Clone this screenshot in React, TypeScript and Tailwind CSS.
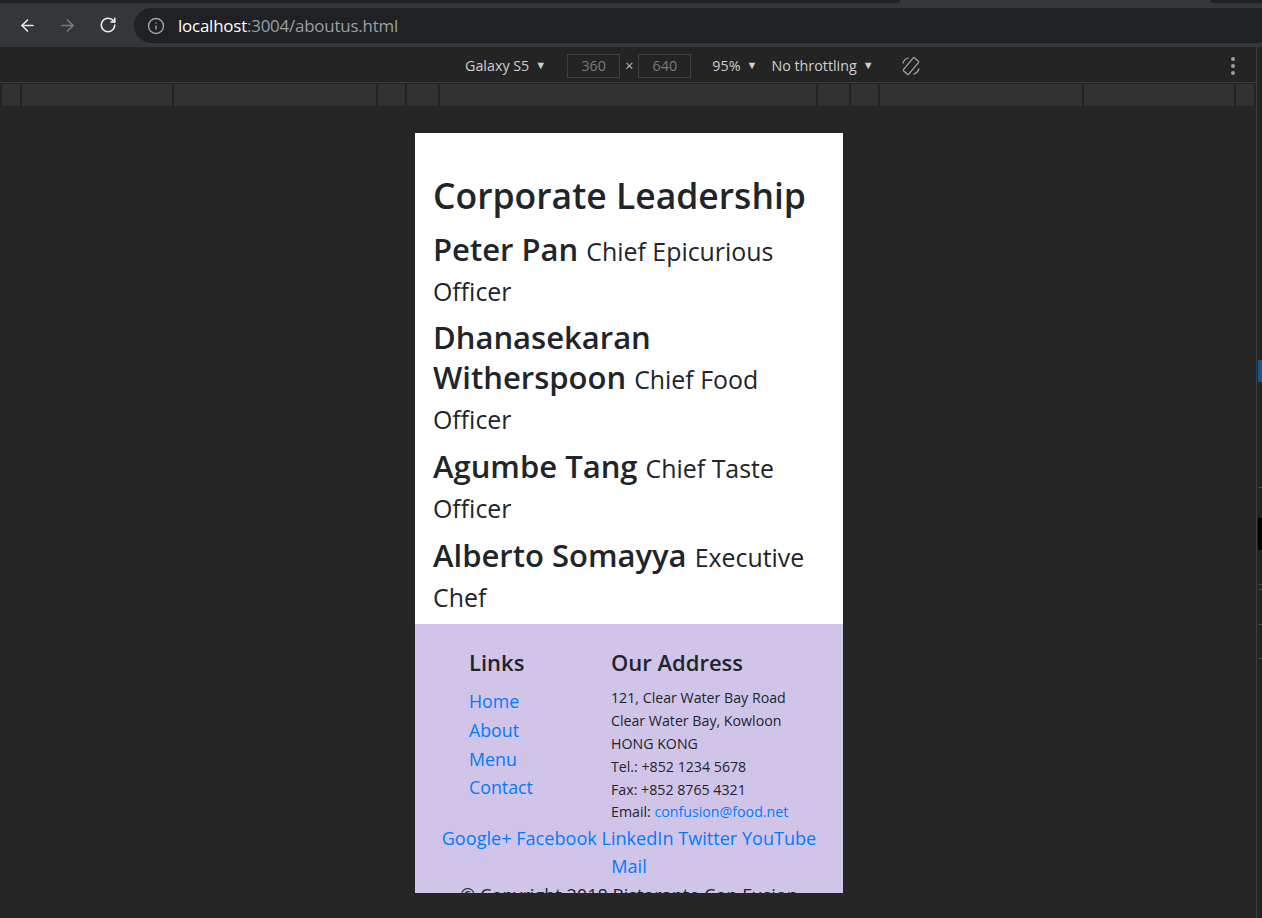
import { ArrowLeft, ArrowRight, RotateCw, Info } from 'lucide-react';

const leaders = [
  { lines: ['Peter Pan'], title: ['Chief Epicurious', 'Officer'] },
  { lines: ['Dhanasekaran', 'Witherspoon'], title: ['Chief Food', 'Officer'] },
  { lines: ['Agumbe Tang'], title: ['Chief Taste', 'Officer'] },
  { lines: ['Alberto Somayya'], title: ['Executive', 'Chef'] },
];

const mediaBars = [18, 150, 202, 27, 31, 376, 31, 27, 202, 150, 18];

function Caret() {
  return <span className="ml-[6px] text-[11px] text-[#cfcfcf]">▼</span>;
}

function RotateIcon() {
  return (
    <svg width="22" height="22" viewBox="0 0 22 22" fill="none" stroke="#a8a8a8" strokeWidth="1.2">
      <rect x="7.5" y="2.5" width="7" height="17" rx="1.2" transform="rotate(40 11 11)" />
      <path d="M2.8 8.5 A8.5 8.5 0 0 1 8.5 2.8" />
      <path d="M19.2 13.5 A8.5 8.5 0 0 1 13.5 19.2" />
    </svg>
  );
}

function Leader({ lines, title }: { lines: string[]; title: string[] }) {
  return (
    <h3 className="text-[31px] leading-[39.9px] font-semibold mb-[8.9px] whitespace-nowrap">
      {lines.map((l, i) =>
        i < lines.length - 1 ? (
          <span key={l}>
            {l}
            <br />
          </span>
        ) : (
          <span key={l}>{l} </span>
        )
      )}
      <small className="text-[24.9px] font-normal leading-[32px]">
        {title[0]}
        <br />
        {title[1]}
      </small>
    </h3>
  );
}

export default function App() {
  return (
    <div className="w-[1262px] h-[918px] bg-[#262626] flex flex-col overflow-hidden font-['Open_Sans',sans-serif]">
      {/* ======= Tab strip edge ======= */}
      <div className="h-[3px] flex bg-[#35363a]">
        <div className="w-[900px] bg-[#202124] rounded-br-[6px]" />
        <div className="flex-1" />
        <div className="w-[52px] bg-[#202124] rounded-bl-[6px]" />
      </div>

      {/* ======= Browser toolbar ======= */}
      <div className="h-[44px] bg-[#35363a] flex items-start">
        <div className="flex items-center h-[44px] pl-[18px]">
          <ArrowLeft size={19} color="#e8eaed" strokeWidth={2} />
          <ArrowRight size={19} color="#7b7c7f" strokeWidth={2} className="ml-[21px]" />
          <RotateCw size={18} color="#e8eaed" strokeWidth={2.2} className="ml-[22px]" />
        </div>
        <div className="mt-[5px] ml-[17px] h-[35px] flex-1 bg-[#202124] rounded-l-full flex items-center pl-[13px]">
          <Info size={18} color="#9aa0a6" strokeWidth={2} />
          <span className="ml-[13px] text-[16.9px] tracking-[-0.2px] text-white">
            localhost<span className="text-[#9aa0a6]">:3004/aboutus.html</span>
          </span>
        </div>
      </div>

      <div className="flex-1 flex">
        <div className="w-[1256px] flex flex-col">
          {/* ======= Device toolbar ======= */}
          <div className="h-[36px] bg-[#242424] border-b border-[#3c3c3c] flex items-center pt-[2px] pl-[465px] text-[14.3px] text-[#cfcfcf]">
            <span>Galaxy S5</span>
            <Caret />
            <div className="ml-[21px] w-[53px] h-[24px] border border-[#3f3f3f] text-[#7a7a7a] flex items-center justify-center">
              360
            </div>
            <span className="mx-[5px] text-[#bdbdbd]">×</span>
            <div className="w-[53px] h-[24px] border border-[#3f3f3f] text-[#7a7a7a] flex items-center justify-center">
              640
            </div>
            <span className="ml-[21px]">95%</span>
            <Caret />
            <span className="ml-[14px]">No throttling</span>
            <Caret />
            <div className="ml-[26px]">
              <RotateIcon />
            </div>
            <div className="ml-auto mr-[21px] flex flex-col gap-[3px]">
              <span className="w-[4px] h-[4px] rounded-full bg-[#9d9d9d]" />
              <span className="w-[4px] h-[4px] rounded-full bg-[#9d9d9d]" />
              <span className="w-[4px] h-[4px] rounded-full bg-[#9d9d9d]" />
            </div>
          </div>

          {/* ======= Media query bar ======= */}
          <div className="h-[23px] bg-[#232323] pt-[1px] pl-[2px] flex gap-[2px]">
            {mediaBars.map((w, i) => (
              <div key={i} className="h-[22px] bg-[#313131]" style={{ width: w }} />
            ))}
          </div>

          {/* ======= Canvas ======= */}
          <div className="flex-1 bg-[#262626] flex justify-center pl-[2px] pt-[27px]">
            <div className="w-[428px] h-[760px] bg-white overflow-hidden text-[#212529]">
              <div className="px-[18px] pt-[40px]">
                <h2 className="text-[35.5px] leading-[45.6px] font-semibold mb-[11px] whitespace-nowrap">
                  Corporate Leadership
                </h2>
                {leaders.map((l) => (
                  <Leader key={l.lines[0]} lines={l.lines} title={l.title} />
                ))}
              </div>

              <footer className="bg-[#d1c4e9] pt-[24px] pb-[20px]">
                <div className="flex pl-[54px]">
                  <div className="w-[142px]">
                    <h5 className="text-[22px] leading-[28.5px] font-semibold mb-[10.5px]">Links</h5>
                    <ul className="text-[17.8px] leading-[28.7px] text-[#007bff]">
                      <li>Home</li>
                      <li>About</li>
                      <li>Menu</li>
                      <li>Contact</li>
                    </ul>
                  </div>
                  <div>
                    <h5 className="text-[22px] leading-[28.5px] font-semibold mb-[10.5px]">Our Address</h5>
                    <address className="not-italic text-[14.2px] leading-[22.8px]">
                      121, Clear Water Bay Road
                      <br />
                      Clear Water Bay, Kowloon
                      <br />
                      HONG KONG
                      <br />
                      Tel.: +852 1234 5678
                      <br />
                      Fax: +852 8765 4321
                      <br />
                      Email: <span className="text-[#007bff]">confusion@food.net</span>
                    </address>
                  </div>
                </div>
                <div className="text-center text-[18.1px] leading-[28.2px] text-[#007bff] whitespace-nowrap">
                  <div>Google+ Facebook LinkedIn Twitter YouTube</div>
                  <div>Mail</div>
                </div>
                <p className="text-center text-[18.1px] leading-[28.5px] whitespace-nowrap">
                  © Copyright 2018 Ristorante Con Fusion
                </p>
              </footer>
            </div>
          </div>
        </div>

        {/* ======= Side panel sliver ======= */}
        <div className="w-px bg-[#3f3f3f]" />
        <div className="flex-1 bg-[#242424] flex flex-col pl-px">
          <div className="mt-[313px] h-[22px] bg-[#0e5a96]" />
          <div className="mt-[105px] h-px bg-[#4a4a4a]" />
          <div className="mt-[30px] h-[32px] bg-black" />
          <div className="mt-[34px] h-px bg-[#4a4a4a]" />
          <div className="mt-[4px] h-px bg-[#4a4a4a]" />
          <div className="mt-[34px] h-px bg-[#4a4a4a]" />
          <div className="mt-[33px] h-px bg-[#4a4a4a]" />
        </div>
      </div>
    </div>
  );
}
